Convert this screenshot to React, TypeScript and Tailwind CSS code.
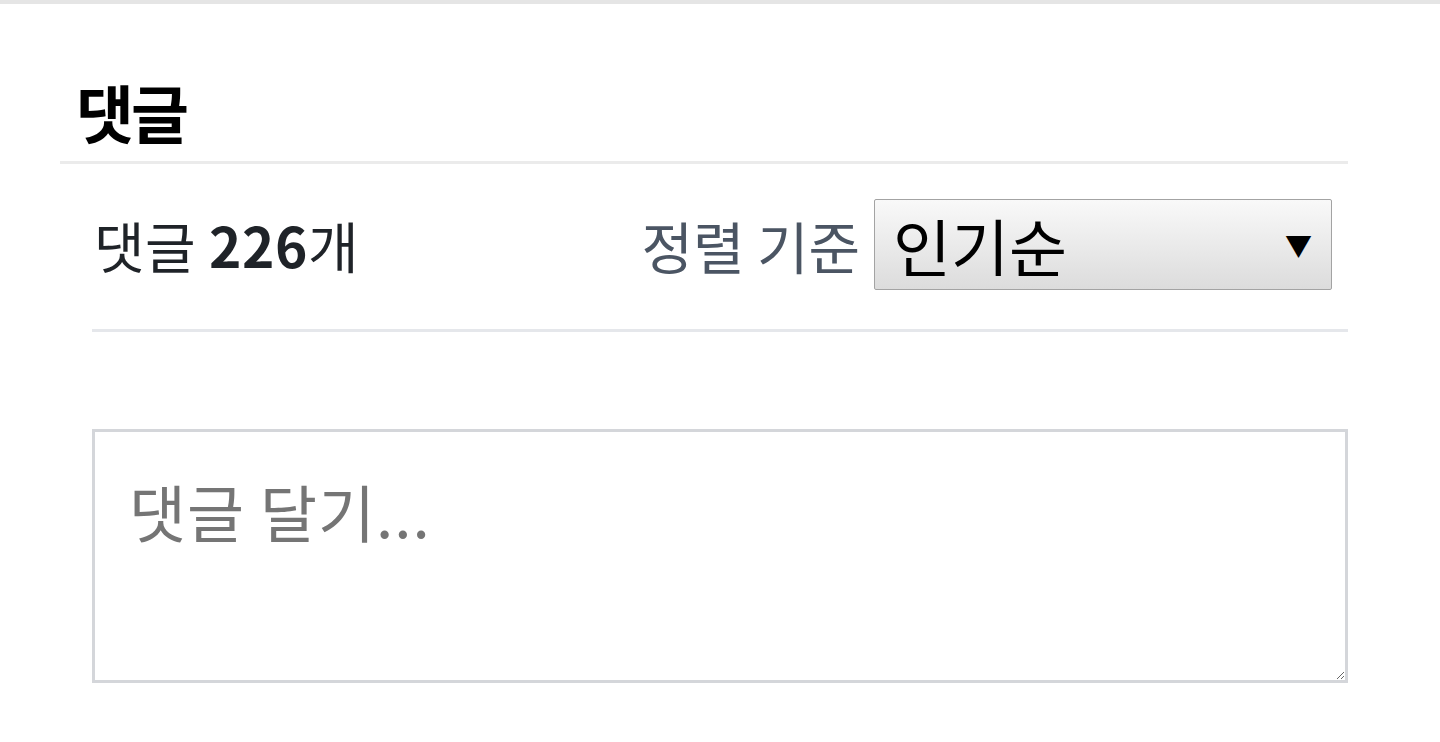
import { useState } from "react";

const ko = { fontFamily: '"Noto Sans CJK KR", "Noto Sans", sans-serif' };

export default function App() {
  const [sort, setSort] = useState("popular");

  return (
    <div className="min-h-screen bg-white border-t-4 border-[#e5e5e5]" style={ko}>
      <section className="pl-[60px] pr-[92px] pt-[67px]">
        {/* Title */}
        <div className="border-b-[3px] border-[#ebebeb] pl-[16px] pb-[11px]">
          <h2 className="text-[63px] font-bold leading-[79px] text-black tracking-[-3px]">댓글</h2>
        </div>

        <div className="pl-[32px]">
          {/* Count + sort */}
          <div className="flex items-center justify-between h-[168px] border-b-[3px] border-[#e5e7eb] pl-[2px] pr-4 pb-[4px]">
            <p className="text-[55px] text-[#1f2328] leading-none tracking-[0.5px]">
              댓글 <span className="font-bold">226</span>개
            </p>
            <div className="flex items-center gap-[14px]">
              <span className="text-[56px] text-[#4b5563] leading-none">정렬 기준</span>
              <div className="relative">
                <select
                  value={sort}
                  onChange={(e) => setSort(e.target.value)}
                  className="appearance-none w-[458px] h-[91px] pl-[18px] text-[63px] leading-none text-black border border-[#a3a3a3] rounded-[2px] bg-gradient-to-b from-[#f9f9f9] to-[#dcdcdc] outline-none"
                  style={ko}
                >
                  <option value="popular">인기순</option>
                  <option value="latest">최신순</option>
                </select>
                <span className="pointer-events-none absolute right-[20px] top-1/2 -translate-y-1/2 text-[27px] text-black">
                  ▼
                </span>
              </div>
            </div>
          </div>

          {/* Comment input */}
          <div className="pt-[97px]">
            <textarea
              placeholder="댓글 달기..."
              className="block w-full h-[254px] border-[3px] border-[#d4d6da] px-[34px] pt-[33px] text-[62px] leading-[93px] tracking-[1px] placeholder:text-[#757575] outline-none resize-y"
              style={ko}
            />
          </div>
        </div>
      </section>
    </div>
  );
}
